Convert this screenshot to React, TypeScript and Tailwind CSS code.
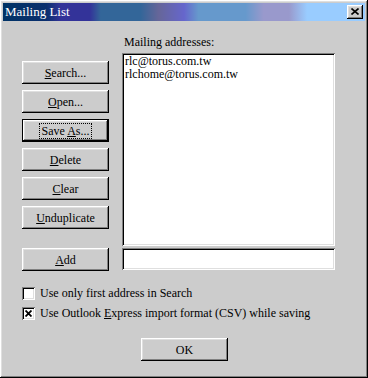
import React from 'react';

const raised =
  'shadow-[inset_-1px_-1px_#000,inset_1px_1px_#fff,inset_-2px_-2px_#808080,inset_2px_2px_#dfdfdf]';
const sunken =
  'shadow-[inset_1px_1px_#808080,inset_-1px_-1px_#fff,inset_2px_2px_#000,inset_-2px_-2px_#dfdfdf]';

function Btn({ children, isDefault = false }: { children: React.ReactNode; isDefault?: boolean }) {
  if (isDefault) {
    return (
      <div className="w-[87px] h-[23px] border border-black bg-[#cccccc]">
        <div className={`w-full h-full flex items-center justify-center ${raised}`}>
          <span className="border border-dotted border-black px-[1px] leading-[14px]">{children}</span>
        </div>
      </div>
    );
  }
  return (
    <div className={`w-[87px] h-[23px] bg-[#cccccc] flex items-center justify-center ${raised}`}>
      <span className="leading-[14px]">{children}</span>
    </div>
  );
}

function Check({ checked, children }: { checked?: boolean; children: React.ReactNode }) {
  return (
    <div className="flex items-center h-[13px]">
      <div className={`w-[13px] h-[13px] bg-white flex items-center justify-center ${sunken}`}>
        {checked && (
          <svg width="7" height="7" viewBox="0 0 7 7">
            <path d="M0.5 0.5L6.5 6.5M6.5 0.5L0.5 6.5" stroke="#000" strokeWidth="1.8" />
          </svg>
        )}
      </div>
      <span className="ml-[5px] leading-[15px]">{children}</span>
    </div>
  );
}

export default function App() {
  return (
    <div
      className={`w-[368px] h-[378px] bg-[#cccccc] p-[3px] text-[12px] text-black font-['Liberation_Serif','Times_New_Roman',serif] ${raised}`}
    >
      {/* title bar */}
      <div className="h-[18px] flex items-center justify-between pl-[2px] pr-[2px] bg-[linear-gradient(90deg,#003366_0%,#0a2f6e_12%,#333399_16%,#333399_24%,#336699_27%,#336699_38%,#666699_43%,#6666cc_50%,#6699cc_54%,#6699cc_67%,#9999cc_72%,#9999cc_79%,#99ccff_84%,#99ccff_100%)]">
        <span className="text-white text-[13px] leading-[18px]">Mailing List</span>
        <div className={`w-[16px] h-[14px] bg-[#cccccc] flex items-center justify-center ${raised}`}>
          <svg width="8" height="7" viewBox="0 0 8 7" className="-mt-[1px]">
            <path d="M0.5 0.5L7.5 6.5M7.5 0.5L0.5 6.5" stroke="#000" strokeWidth="1.6" />
          </svg>
        </div>
      </div>

      <div className="pl-[19px]">
        <div className="flex">
          <div className="w-[87px] flex flex-col gap-[6px] pt-[40px]">
            <Btn><u>S</u>earch...</Btn>
            <Btn><u>O</u>pen...</Btn>
            <Btn isDefault>Save <u>A</u>s...</Btn>
            <Btn><u>D</u>elete</Btn>
            <Btn><u>C</u>lear</Btn>
            <Btn><u>U</u>nduplicate</Btn>
          </div>
          <div className="ml-[13px] w-[213px]">
            <div className="h-[32px] flex items-end pb-[3px] pl-[2px] leading-[15px]">Mailing addresses:</div>
            <div className={`h-[193px] bg-white px-[3px] pt-[2px] leading-[13px] ${sunken}`}>
              <div className="h-[13px]">rlc@torus.com.tw</div>
              <div className="h-[13px]">rlchome@torus.com.tw</div>
            </div>
          </div>
        </div>

        <div className="flex mt-[2px]">
          <Btn><u>A</u>dd</Btn>
          <div className={`ml-[13px] w-[213px] h-[22px] bg-white ${sunken}`} />
        </div>

        <div className="flex flex-col gap-[7px] pt-[16px]">
          <Check>Use only first address in Search</Check>
          <Check checked>Use Outlook <u>E</u>xpress import format (CSV) while saving</Check>
        </div>
      </div>

      <div className="flex justify-center pt-[18px] pl-[1px]">
        <Btn>OK</Btn>
      </div>
    </div>
  );
}
